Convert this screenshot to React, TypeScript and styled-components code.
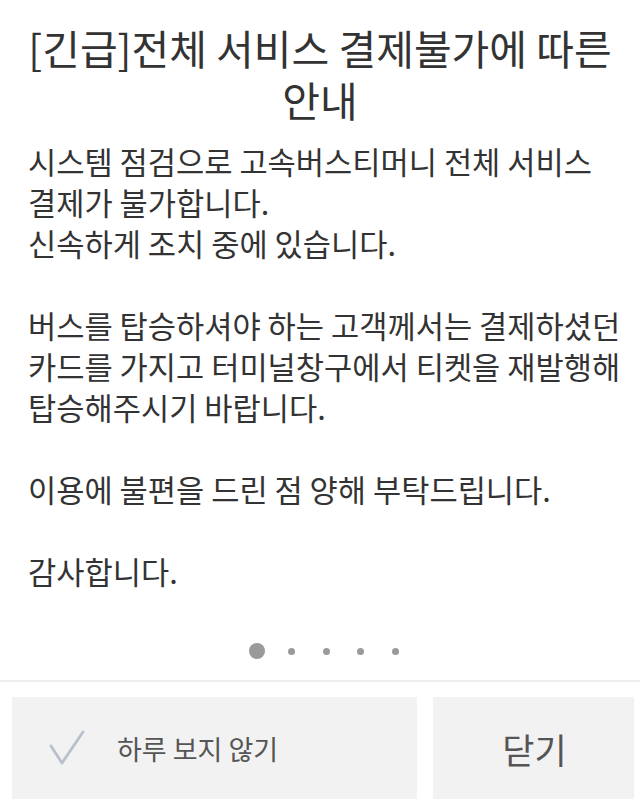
import React from 'react';
import styled, { createGlobalStyle } from 'styled-components';

const GlobalStyle = createGlobalStyle`
  html, body {
    margin: 0;
    padding: 0;
    background: #ffffff;
  }
  body {
    font-family: "Noto Sans CJK KR", "Noto Sans", sans-serif;
    color: #333333;
  }
`;

const Page = styled.div`
  width: 640px;
  height: 807px;
  display: flex;
  flex-direction: column;
  overflow: hidden;
`;

const Title = styled.h1`
  margin: 0;
  padding: 21px 6px 0;
  font-size: 41px;
  font-weight: 400;
  line-height: 52px;
  text-align: center;
  color: #333333;
`;

const Body = styled.div`
  padding: 15px 28px 0;
  font-size: 30.7px;
  line-height: 41px;
  color: #333333;
  flex: 1;
`;

const Line = styled.p`
  margin: 0;
  min-height: 41px;
  white-space: nowrap;
`;

const Dots = styled.div`
  display: flex;
  align-items: center;
  justify-content: center;
  height: 30px;
  padding-bottom: 14px;
  padding-left: 8px;
  gap: 27.6px;
`;

const Dot = styled.span<{ $active?: boolean }>`
  width: ${(p) => (p.$active ? 16 : 7)}px;
  height: ${(p) => (p.$active ? 16 : 7)}px;
  border-radius: 50%;
  background: #9a9a9a;
  margin-right: ${(p) => (p.$active ? -5 : 0)}px;
`;

const Divider = styled.div`
  height: 2px;
  background: #eeeeee;
`;

const Footer = styled.div`
  display: flex;
  gap: 16px;
  padding: 15px 6px 8px 12px;
`;

const FooterButton = styled.button`
  height: 102px;
  border: none;
  background: #f2f2f2;
  display: flex;
  align-items: center;
  font-family: "Noto Sans CJK KR", "Noto Sans", sans-serif;
  color: #555555;
  padding: 0;
`;

const SkipButton = styled(FooterButton)`
  width: 405px;
  flex: none;
  justify-content: flex-start;
  padding-left: 37px;
  gap: 32px;
  font-size: 27px;
`;

const CloseButton = styled(FooterButton)`
  flex: 1;
  justify-content: center;
  padding-left: 2px;
  font-size: 35px;
`;

const lines = [
  '시스템 점검으로 고속버스티머니 전체 서비스',
  '결제가 불가합니다.',
  '신속하게 조치 중에 있습니다.',
  '',
  '버스를 탑승하셔야 하는 고객께서는 결제하셨던',
  '카드를 가지고 터미널창구에서 티켓을 재발행해',
  '탑승해주시기 바랍니다.',
  '',
  '이용에 불편을 드린 점 양해 부탁드립니다.',
  '',
  '감사합니다.',
];

const CheckIcon = () => (
  <svg width="36" height="36" viewBox="0 0 36 36">
    <path d="M2 16 L13 33 L34 2" fill="none" stroke="#b9c0cd" strokeWidth="2.8" strokeLinecap="round" strokeLinejoin="round" />
  </svg>
);

export default function App() {
  return (
    <Page>
      <GlobalStyle />
      <Title>
        [긴급]전체 서비스 결제불가에 따른
        <br />
        안내
      </Title>
      <Body>
        {lines.map((l, i) => (
          <Line key={i}>{l}</Line>
        ))}
      </Body>
      <Dots>
        <Dot $active />
        <Dot />
        <Dot />
        <Dot />
        <Dot />
      </Dots>
      <Divider />
      <Footer>
        <SkipButton>
          <CheckIcon />
          하루 보지 않기
        </SkipButton>
        <CloseButton>닫기</CloseButton>
      </Footer>
    </Page>
  );
}
